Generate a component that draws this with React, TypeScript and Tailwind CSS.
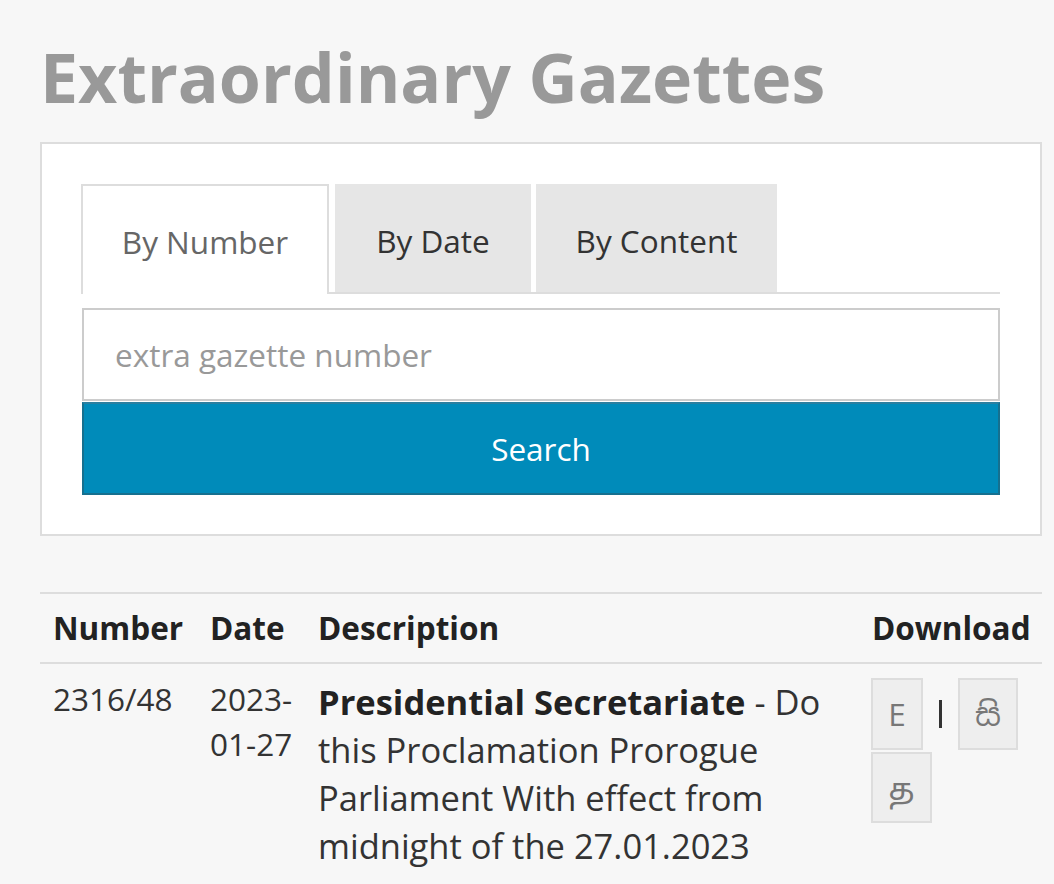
import React from "react";

const font = { fontFamily: '"Open Sans", "Noto Sans", "Noto Sans Sinhala", "Noto Sans Tamil", sans-serif' };

export default function App() {
  return (
    <div className="min-h-[884px] w-[1054px] overflow-hidden bg-[#f7f7f7] text-[#333]" style={font}>
      <div className="ml-[40px] w-[1002px]">
        <h1 className="pt-[38px] text-[68px] font-bold leading-[77px] text-[#999]">
          Extraordinary Gazettes
        </h1>

        <div className="mt-[27px] border-2 border-[#ddd] bg-white p-[40px] pb-[39px]">
          <div className="flex h-[110px] items-end border-b-2 border-[#ddd]">
            <div className="-mb-[2px] flex h-[110px] w-[248px] -ml-[1px] items-center justify-center border-2 border-b-0 border-[#ddd] bg-white pt-[3px] text-[31.5px] text-[#666]">
              By Number
            </div>
            <div className="ml-[6px] flex h-[108px] w-[196px] items-center justify-center self-start bg-[#e6e6e6] pt-[6px] text-[31.5px] text-[#333]">
              By Date
            </div>
            <div className="ml-[5px] flex h-[108px] w-[241px] items-center justify-center self-start bg-[#e6e6e6] pt-[6px] text-[31.5px] text-[#333]">
              By Content
            </div>
          </div>

          <div className="mt-[14px] flex h-[93px] items-center border-2 border-[#ccc] bg-white pl-[31px] text-[31.5px] text-[#999]">
            extra gazette number
          </div>
          <div className="mt-[1px] flex h-[93px] items-center justify-center border-2 border-[#16708f] border-t-[#2a7fa0] bg-[#008bba] text-[31.5px] text-white">
            Search
          </div>
        </div>

        <div className="mt-[56px] border-t-2 border-[#ddd]">
          <div className="grid grid-cols-[157px_108px_554px_183px] border-b-2 border-[#ddd] text-[31.5px] font-bold leading-[45px] text-[#222]">
            <div className="px-[13px] pt-[11px] pb-[12px]">Number</div>
            <div className="px-[13px] pt-[11px] pb-[12px]">Date</div>
            <div className="px-[13px] pt-[11px] pb-[12px]">Description</div>
            <div className="px-[13px] pt-[11px] pb-[12px]">Download</div>
          </div>
          <div className="grid grid-cols-[157px_108px_554px_183px] text-[31.5px] text-[#333]">
            <div className="px-[13px] pt-[12px] leading-[45px]">2316/48</div>
            <div className="whitespace-nowrap px-[13px] pt-[12px] leading-[45px]">
              2023-
              <br />
              01-27
            </div>
            <div className="px-[13px] pt-[14px] text-[34.5px] leading-[48px]">
              <span className="font-bold text-[#222]">Presidential Secretariate</span> - Do this Proclamation Prorogue
              Parliament With effect from midnight of the 27.01.2023
            </div>
            <div className="pl-[12px] pt-[14px]">
              <div className="flex items-center">
                <div className="flex h-[72px] w-[52px] items-center justify-center border-2 border-[#ddd] bg-[#eee] text-[#777]">
                  E
                </div>
                <div className="mx-[16px] h-[28px] w-[3px] bg-[#333]" />
                <div className="flex h-[72px] w-[60px] items-center justify-center border-2 border-[#ddd] bg-[#eee] text-[#777]">
                  සි
                </div>
              </div>
              <div className="mt-[2px] flex h-[71px] w-[61px] items-center justify-center border-2 border-[#ddd] bg-[#eee] text-[#777]">
                த
              </div>
            </div>
          </div>
        </div>
      </div>
    </div>
  );
}
